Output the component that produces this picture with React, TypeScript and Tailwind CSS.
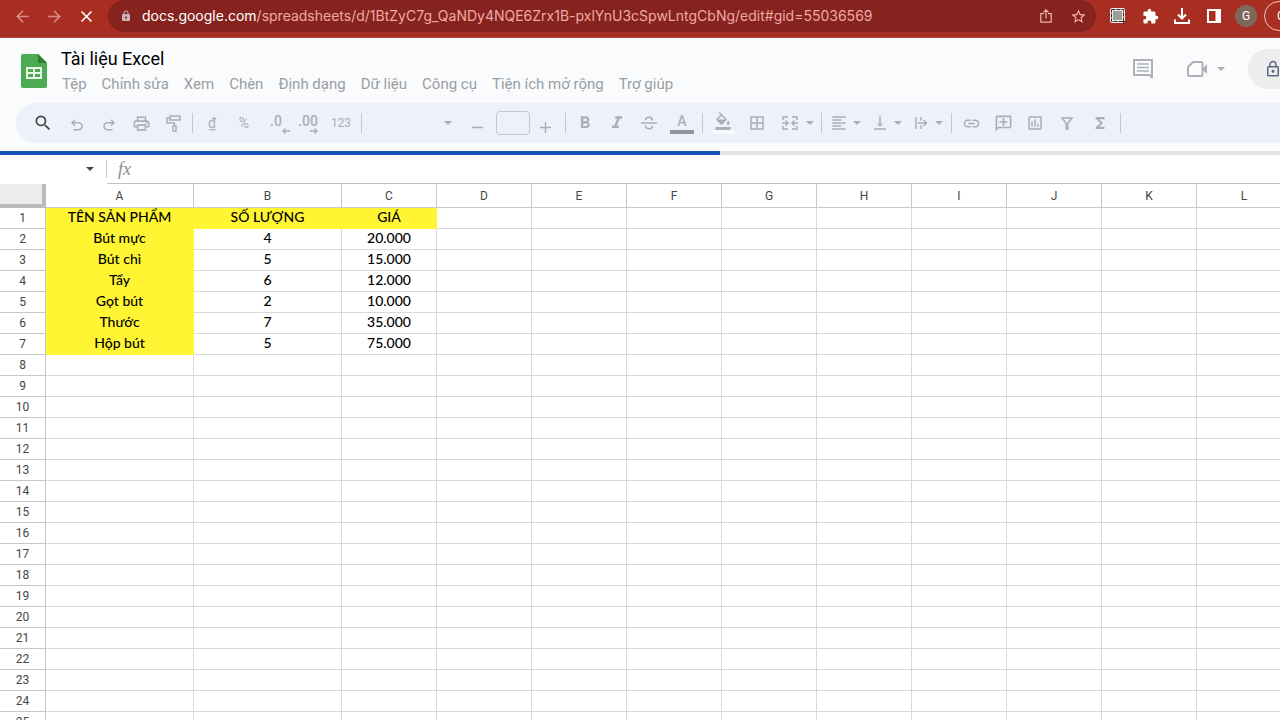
import type { ReactNode } from 'react'
import {
  MdArrowBack,
  MdArrowForward,
  MdBorderAll,
  MdClose,
  MdExtension,
  MdFormatAlignLeft,
  MdFormatBold,
  MdFormatColorFill,
  MdFormatItalic,
  MdFunctions,
  MdInsertLink,
  MdLock,
  MdLockOutline,
  MdOutlineAddComment,
  MdOutlineInsertChart,
  MdOutlinePrint,
  MdSearch,
  MdStarBorder,
  MdVerticalAlignBottom,
} from 'react-icons/md'

const menus = ['Tệp', 'Chỉnh sửa', 'Xem', 'Chèn', 'Định dạng', 'Dữ liệu', 'Công cụ', 'Tiện ích mở rộng', 'Trợ giúp']

const columns = ['A', 'B', 'C', 'D', 'E', 'F', 'G', 'H', 'I', 'J', 'K', 'L']

const cells = [
  ['TÊN SẢN PHẨM', 'SỐ LƯỢNG', 'GIÁ'],
  ['Bút mực', '4', '20.000'],
  ['Bút chì', '5', '15.000'],
  ['Tẩy', '6', '12.000'],
  ['Gọt bút', '2', '10.000'],
  ['Thước', '7', '35.000'],
  ['Hộp bút', '5', '75.000'],
]

const rows = Array.from({ length: 25 }, (_, i) => i)

function Caret() {
  return (
    <svg width="8" height="4" viewBox="0 0 8 4" fill="currentColor" className="shrink-0">
      <path d="M0 0h8L4 4z" />
    </svg>
  )
}

function Divider() {
  return <span className="mx-[3px] h-5 w-px shrink-0 bg-[#c4c7cc]" />
}

function Tool({ label, wide, children }: { label: string; wide?: boolean; children: ReactNode }) {
  return (
    <button
      aria-label={label}
      className={`flex h-8 shrink-0 items-center justify-center ${wide ? 'w-[34px]' : 'w-8'}`}
    >
      {children}
    </button>
  )
}

function MenuTool({ label, children }: { label: string; children: ReactNode }) {
  return (
    <button aria-label={label} className="flex h-8 w-[41px] shrink-0 items-center gap-[5px] pl-[5px]">
      {children}
      <Caret />
    </button>
  )
}

function BrowserBar() {
  return (
    <div className="flex h-[38px] shrink-0 items-start overflow-hidden border-b border-[#b8453c] bg-[#a92e22] pl-[6px]">
      <div className="flex h-8 shrink-0 items-center text-[#d98b84]">
        <Tool label="Quay lại"><MdArrowBack size={19} /></Tool>
        <Tool label="Tiến"><MdArrowForward size={19} /></Tool>
        <Tool label="Dừng"><MdClose size={19} className="text-white" /></Tool>
      </div>
      <div className="ml-[6px] flex h-8 min-w-0 flex-1 items-center rounded-full bg-[#87231f] pr-[2px] pl-3">
        <MdLock size={12} className="mr-[10px] shrink-0 text-[#c9b3b2]" />
        <a
          href="#gid=55036569"
          className="min-w-0 flex-1 overflow-hidden font-['Inter',sans-serif] text-sm whitespace-nowrap text-[#f0a9a4]"
        >
          <span className="text-white">docs.google.com</span>
          /spreadsheets/d/1BtZyC7g_QaNDy4NQE6Zrx1B-pxlYnU3cSpwLntgCbNg/edit#gid=55036569
        </a>
        <div className="flex shrink-0 text-[#f0b3ae]">
          <Tool label="Chia sẻ trang">
            <svg width="12" height="14" viewBox="0 0 12 14" fill="none" stroke="currentColor" strokeWidth="1.2">
              <path d="M4 4.6H.8v8.6h10.4V4.6H8M6 9.5V1M3.5 3.4 6 .9l2.500 2.500" />
            </svg>
          </Tool>
          <Tool label="Đánh dấu trang"><MdStarBorder size={17} /></Tool>
        </div>
      </div>
      <div className="flex h-8 w-[184px] shrink-0 items-center overflow-hidden pl-[6px] text-white">
        <Tool label="Chụp màn hình">
          <svg width="16" height="16" viewBox="0 0 16 16" fill="none">
            <rect x="0" y="0" width="15" height="15" rx="2" fill="#f3e9e8" />
            <rect x="1.500" y="1.500" width="12" height="12" stroke="#2b2b2b" strokeDasharray="4 1" />
            <rect x="3" y="3" width="9" height="9" fill="#9b9f98" />
            <path d="M13.500 11v5M11 13.500h5" stroke="#2b2b2b" />
          </svg>
        </Tool>
        <Tool label="Tiện ích"><MdExtension size={17} /></Tool>
        <Tool label="Tải xuống">
          <svg width="16" height="16" viewBox="0 0 16 16" fill="none" stroke="currentColor" strokeWidth="2">
            <path d="M8 0v10M4 6.500l4 4 4-4M1 11.500V15h14v-3.500" />
          </svg>
        </Tool>
        <Tool label="Bảng điều khiển bên">
          <svg width="14" height="14" viewBox="0 0 14 14" fill="currentColor">
            <path fillRule="evenodd" d="M0 0h14v14H0zM2 2v10h6.500V2z" />
          </svg>
        </Tool>
        <Tool label="Hồ sơ">
          <span className="flex size-[22px] items-center justify-center rounded-full bg-[#80675c] font-['Roboto',sans-serif] text-xs">
            G
          </span>
        </Tool>
        <button className="ml-[2px] flex h-[30px] w-20 shrink-0 items-center rounded-full border border-[#eec3bf] pl-3 text-xs">
          Cập nhật
        </button>
      </div>
    </div>
  )
}

function Header() {
  return (
    <header className="flex h-[65px] shrink-0 overflow-hidden pl-[21px]">
      <svg width="26" height="34" viewBox="0 0 26 34" className="mt-4 shrink-0">
        <path d="M2 0h15l9 9v23a2 2 0 0 1-2 2H2a2 2 0 0 1-2-2V2a2 2 0 0 1 2-2z" fill="#4caa50" />
        <path d="M17 0l9 9h-9z" fill="#2f7d36" />
        <path fillRule="evenodd" d="M5 13h16v12H5zM7 15v3h5v-3zM14 15v3h5v-3zM7 20v3h5v-3zM14 20v3h5v-3z" fill="#eaf5ea" />
      </svg>
      <div className="min-w-0 flex-1 pt-2 pl-[14px]">
        <h1 className="text-lg leading-[26px] text-black">Tài liệu Excel</h1>
        <nav className="flex gap-[15px] pl-px text-[15px] leading-6 whitespace-nowrap text-[#9a9ea3]">
          {menus.map((m) => (
            <button key={m}>{m}</button>
          ))}
        </nav>
      </div>
      <div className="flex w-[147px] shrink-0 items-center pb-1 text-[#adb0b4]">
        <button aria-label="Nhận xét" className="mr-[34px]">
          <svg width="20" height="20" viewBox="0 0 20 20" fill="none" stroke="currentColor" strokeWidth="2">
            <path d="M1 1h18v17.500L16.500 16H1z" strokeLinejoin="round" />
            <path d="M4 5h12M4 8.500h12M4 12h12" strokeWidth="1.500" />
          </svg>
        </button>
        <button aria-label="Cuộc gọi" className="flex items-center gap-[10px]">
          <svg width="20" height="16" viewBox="0 0 20 16" fill="none" stroke="currentColor" strokeWidth="2">
            <path d="M6 1h8q1.500 0 1.500 1.500v11Q15.500 15 14 15H2.500Q1 15 1 13.500V6z" strokeLinejoin="round" />
            <path d="M15 8l5-5v10z" fill="currentColor" stroke="none" />
          </svg>
          <Caret />
        </button>
        <button
          aria-label="Chia sẻ"
          className="ml-[23px] flex h-10 w-28 shrink-0 items-center rounded-full bg-[#ededee] pl-4 text-[#5a6780]"
        >
          <MdLockOutline size={18} />
        </button>
      </div>
    </header>
  )
}

function Toolbar() {
  return (
    <div className="ml-4 flex h-10 shrink-0 items-center overflow-hidden rounded-l-full bg-[#edf2fa] pl-[11px] text-[#a9aeb7]">
      <Tool label="Tìm kiếm"><MdSearch size={20} className="text-[#444746]" /></Tool>
      <span className="w-[2px]" />
      <Tool label="Hoàn tác">
        <svg width="12" height="12" viewBox="0 0 12 12" fill="none" stroke="currentColor" strokeWidth="1.500" className="mt-1">
          <path d="M4 .8 1 3.800l3 3M1 3.800h6.500a3.500 3.500 0 0 1 0 7H2.500" />
        </svg>
      </Tool>
      <Tool label="Làm lại">
        <svg width="12" height="12" viewBox="0 0 12 12" fill="none" stroke="currentColor" strokeWidth="1.500" className="mt-1">
          <path d="M8 .8l3 3-3 3M11 3.800H4.500a3.500 3.500 0 0 0 0 7h5" />
        </svg>
      </Tool>
      <Tool label="In"><MdOutlinePrint size={19} /></Tool>
      <Tool label="Sao chép định dạng">
        <svg width="15" height="17" viewBox="0 0 15 17" fill="none" stroke="currentColor" strokeWidth="1.500">
          <path d="M4 1h10v4H4zM4 3H1v5h7.500v3M7 11h3v5H7z" />
        </svg>
      </Tool>
      <Divider />
      <Tool label="Tiền tệ"><span className="text-sm">₫</span></Tool>
      <Tool label="Phần trăm"><span className="text-sm">%</span></Tool>
      <Tool label="Giảm số thập phân">
        <span className="relative pb-1 text-sm leading-4 font-medium">
          .0
          <svg width="8" height="6" viewBox="0 0 8 6" fill="none" stroke="currentColor" strokeWidth="1.300" className="absolute -right-2 -bottom-px">
            <path d="M8 3H1M3.500.5 1 3l2.500 2.500" />
          </svg>
        </span>
      </Tool>
      <Tool label="Tăng số thập phân">
        <span className="relative pb-1 text-sm leading-4 font-medium">
          .00
          <svg width="8" height="6" viewBox="0 0 8 6" fill="none" stroke="currentColor" strokeWidth="1.300" className="absolute right-0 -bottom-px">
            <path d="M0 3h7M4.500.5 7 3 4.500 5.500" />
          </svg>
        </span>
      </Tool>
      <Tool label="Định dạng khác" wide><span className="text-xs">123</span></Tool>
      <Divider />
      <div className="relative flex h-8 w-24 shrink-0 items-center">
        <select aria-label="Phông chữ" className="h-8 w-full appearance-none bg-transparent text-sm outline-none" />
        <span className="pointer-events-none absolute right-[9px]"><Caret /></span>
      </div>
      <Tool label="Giảm cỡ chữ">
        <svg width="11" height="11" viewBox="0 0 11 11" stroke="currentColor" strokeWidth="1.500" className="mt-2">
          <path d="M0 5.500h11" />
        </svg>
      </Tool>
      <input
        aria-label="Cỡ chữ"
        className="mx-[3px] h-6 w-[34px] shrink-0 rounded border border-[#c4c7cc] bg-transparent text-center text-xs outline-none"
      />
      <button aria-label="Tăng cỡ chữ" className="mr-[5px] flex h-8 w-6 shrink-0 items-center justify-center">
        <svg width="11" height="11" viewBox="0 0 11 11" stroke="currentColor" strokeWidth="1.500" className="mt-2">
          <path d="M0 5.500h11M5.500 0v11" />
        </svg>
      </button>
      <Divider />
      <Tool label="In đậm"><MdFormatBold size={20} /></Tool>
      <Tool label="In nghiêng"><MdFormatItalic size={20} /></Tool>
      <Tool label="Gạch ngang">
        <svg width="16" height="14" viewBox="0 0 16 14" fill="none" stroke="currentColor" strokeWidth="1.600">
          <path d="M0 7h16M11.500 4.500C11.300 2.300 10 1.200 8 1.200S4.600 2.300 4.600 4M4.400 9.500c.2 2.200 1.600 3.300 3.600 3.300s3.500-1 3.500-2.800" />
        </svg>
      </Tool>
      <Tool label="Màu văn bản" wide>
        <span className="border-b-4 border-[#92959b] px-[7px] text-sm leading-[18px] font-medium">A</span>
      </Tool>
      <Divider />
      <Tool label="Màu nền" wide>
        <span className="border-b-4 border-[#f7f9fc] px-[3px]"><MdFormatColorFill size={18} /></span>
      </Tool>
      <Tool label="Đường viền" wide><MdBorderAll size={18} /></Tool>
      <Tool label="Hợp nhất ô">
        <svg width="16" height="14" viewBox="0 0 16 14" fill="none" stroke="currentColor" strokeWidth="1.500">
          <path d="M6 1H1v3M1 10v3h5M10 1h5v3M15 10v3h-5M0 7h6M3.500 4.500 6 7l-2.500 2.500M16 7h-6M12.500 4.500 10 7l2.500 2.500" />
        </svg>
      </Tool>
      <button aria-label="Kiểu hợp nhất" className="flex h-8 w-3 shrink-0 items-center"><Caret /></button>
      <Divider />
      <MenuTool label="Căn ngang"><MdFormatAlignLeft size={18} /></MenuTool>
      <MenuTool label="Căn dọc"><MdVerticalAlignBottom size={18} /></MenuTool>
      <MenuTool label="Xuống dòng">
        <svg width="18" height="14" viewBox="0 0 18 14" fill="none" stroke="currentColor" strokeWidth="1.500">
          <path d="M4 1v12M9 1v3.500M9 9.500V13M6 7h8M11.500 4 14.500 7l-3 3" />
        </svg>
      </MenuTool>
      <Divider />
      <Tool label="Chèn đường liên kết"><MdInsertLink size={19} /></Tool>
      <Tool label="Chèn nhận xét">
        <MdOutlineAddComment size={19} className="-scale-x-100" />
      </Tool>
      <Tool label="Chèn biểu đồ"><MdOutlineInsertChart size={18} /></Tool>
      <Tool label="Tạo bộ lọc">
        <svg width="12" height="13" viewBox="0 0 12 13" fill="none" stroke="currentColor" strokeWidth="1.500">
          <path d="M1 1h10L6.800 6.500V12H5.200V6.500z" />
        </svg>
      </Tool>
      <Tool label="Hàm" wide><MdFunctions size={18} /></Tool>
      <Divider />
    </div>
  )
}

function FormulaBar() {
  return (
    <div className="flex h-[29px] shrink-0">
      <div className="flex w-[107px] shrink-0 items-center pb-px">
        <input aria-label="Hộp tên" className="h-6 w-[86px] pl-2 text-sm outline-none" />
        <button aria-label="Dải ô đã đặt tên" className="flex h-6 w-5 items-center text-[#444746]"><Caret /></button>
        <span className="h-[18px] w-px bg-[#c7c7c7]" />
      </div>
      <label className="flex min-w-0 flex-1 items-center border-b border-[#c0c0c0] pl-[11px]">
        <span className="font-['Liberation_Serif',serif] text-lg leading-5 text-[#8c8c8c] italic">fx</span>
        <input className="ml-2 h-6 min-w-0 flex-1 text-sm outline-none" />
      </label>
    </div>
  )
}

function Sheet() {
  return (
    <main className="min-h-0 flex-1 overflow-hidden">
      <table className="w-[1292px] table-fixed border-separate border-spacing-0 text-center">
        <colgroup>
          <col className="w-[46px]" />
          {columns.map((c) => (
            <col key={c} className={c === 'A' || c === 'B' ? 'w-[148px]' : 'w-[95px]'} />
          ))}
        </colgroup>
        <thead>
          <tr className="h-6 text-xs text-[#444746]">
            <th aria-label="Chọn tất cả" className="border-r-4 border-b-4 border-[#bbbbbb] bg-[#ededed] p-0" />
            {columns.map((c) => (
              <th key={c} scope="col" className="border-r border-b border-[#c8c8c8] p-0 font-normal">{c}</th>
            ))}
          </tr>
        </thead>
        <tbody>
          {rows.map((r) => (
            <tr key={r} className="h-[21px]">
              <th scope="row" className="border-r border-b border-[#c8c8c8] p-0 text-xs leading-5 font-normal text-[#444746]">
                {r + 1}
              </th>
              {columns.map((c, i) => {
                const filled = (r === 0 && i < 3) || (r < 7 && i === 0)
                return (
                  <td
                    key={c}
                    className={`border-r border-b p-0 pb-[2px] font-['Lato',sans-serif] text-sm leading-[18px] font-medium text-black ${
                      filled ? 'border-[#fff533] bg-[#fff533]' : 'border-[#d9d9d9]'
                    }`}
                  >
                    {cells[r]?.[i]}
                  </td>
                )
              })}
            </tr>
          ))}
        </tbody>
      </table>
    </main>
  )
}

function App() {
  return (
    <div className="flex h-screen flex-col overflow-hidden bg-white font-['Roboto',sans-serif]">
      <BrowserBar />
      <div className="shrink-0 bg-[#f9fbfd] pb-2">
        <Header />
        <Toolbar />
      </div>
      <div
        role="progressbar"
        aria-label="Đang tải"
        aria-valuenow={56}
        className="h-1 shrink-0 bg-[#e1e3df]"
      >
        <div className="h-full w-9/16 bg-[#1852b8]" />
      </div>
      <FormulaBar />
      <Sheet />
    </div>
  )
}

export default App
